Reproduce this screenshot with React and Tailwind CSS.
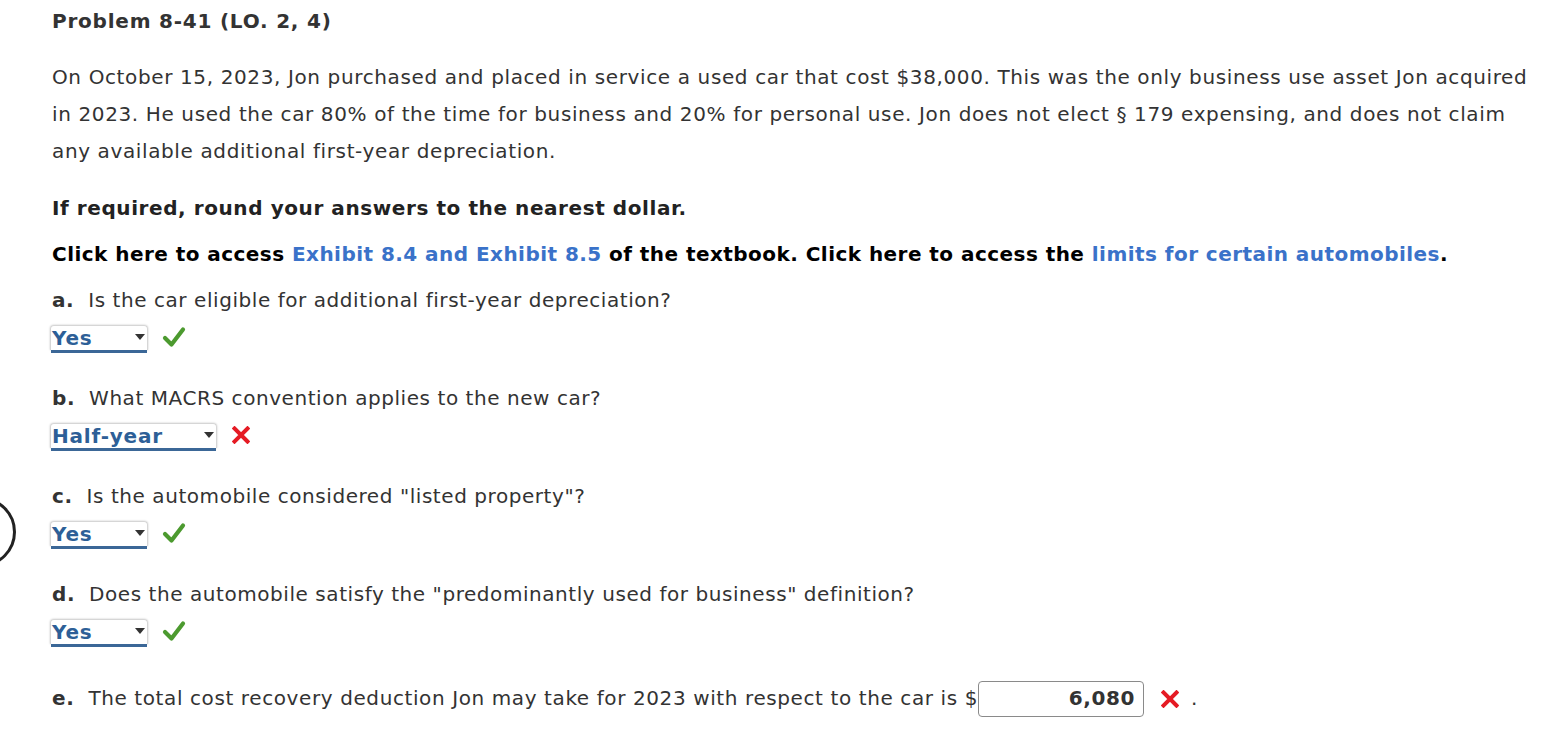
import React from "react";

function Check() {
  return (
    <svg width="24" height="22" viewBox="0 0 24 22" className="ml-[14px] shrink-0">
      <path d="M3 12 L9.5 18.5 L21 3.5" fill="none" stroke="#4c9a2f" strokeWidth="4.2" strokeLinecap="round" strokeLinejoin="round" />
    </svg>
  );
}

function Cross({ className = "" }) {
  return (
    <svg width="18" height="18" viewBox="0 0 18 18" className={className}>
      <path d="M2.5 2.5 L15.5 15.5 M15.5 2.5 L2.5 15.5" fill="none" stroke="#e51b24" strokeWidth="4" strokeLinecap="square" />
    </svg>
  );
}

function Select({ value, width }) {
  return (
    <div
      className="relative ml-[-2px] flex h-[25px] items-center rounded-t-[4px] border border-b-0 border-[#d6d6d6] shadow-[0_0_2px_rgba(0,0,0,0.25)]"
      style={{ width }}
    >
      <span className="pl-[1px] text-[20px] font-bold leading-none tracking-[0.8px] text-[#2d5f97]">{value}</span>
      <svg width="10" height="6" viewBox="0 0 10 6" className="absolute right-[2px] top-[8px]">
        <path d="M0 0 L10 0 L5 6 Z" fill="#333" />
      </svg>
      <div className="absolute bottom-[-3px] left-0 right-0 h-[3px] bg-[#3b6797]" />
    </div>
  );
}

function Question({ label, text, value, width, ok, last }) {
  return (
    <div className={last ? "mb-[31px]" : "mb-[25px]"}>
      <div className="flex h-[37px] items-center whitespace-nowrap tracking-[0.56px]">
        <span className="font-bold">{label}</span>
        <span className="ml-[14px]">{text}</span>
      </div>
      <div className="flex h-[36px] items-center">
        <Select value={value} width={width} />
        {ok ? <Check /> : <Cross className="ml-[15px]" />}
      </div>
    </div>
  );
}

export default function App() {
  return (
    <div className="relative min-h-[732px] overflow-hidden bg-white pl-[52px] pt-[3px] font-['DejaVu_Sans',Verdana,sans-serif] text-[20px] leading-[37px] tracking-[0.6px] text-[#333]">
      <div className="pointer-events-none absolute left-[-54px] top-[497px] h-[70px] w-[70px] rounded-full border-[3px] border-[#222]" />
      <div className="font-bold tracking-[0.78px]">Problem 8-41 (LO. 2, 4)</div>
      <div className="mt-[19px] whitespace-nowrap tracking-[0.62px]">
        <div>On October 15, 2023, Jon purchased and placed in service a used car that cost $38,000. This was the only business use asset Jon acquired</div>
        <div>in 2023. He used the car 80% of the time for business and 20% for personal use. Jon does not elect § 179 expensing, and does not claim</div>
        <div>any available additional first-year depreciation.</div>
      </div>
      <div className="mt-[20px] font-bold tracking-[0.58px] text-[#222]">If required, round your answers to the nearest dollar.</div>
      <div className="mt-[9px] whitespace-nowrap font-bold tracking-[0.45px] text-black">
        Click here to access <span className="text-[#3a72c9]">Exhibit 8.4 and Exhibit 8.5</span> of the textbook. Click here to access the{" "}
        <span className="text-[#3a72c9]">limits for certain automobiles</span>.
      </div>
      <div className="mt-[9px]">
        <Question label="a." text="Is the car eligible for additional first-year depreciation?" value="Yes" width={98} ok />
        <Question label="b." text="What MACRS convention applies to the new car?" value="Half-year" width={167} ok={false} />
        <Question label="c." text={'Is the automobile considered "listed property"?'} value="Yes" width={98} ok />
        <Question label="d." text={'Does the automobile satisfy the "predominantly used for business" definition?'} value="Yes" width={98} ok last />
        <div className="flex h-[37px] items-center whitespace-nowrap">
          <span className="font-bold">e.</span>
          <span className="ml-[14px]">The total cost recovery deduction Jon may take for 2023 with respect to the car is $</span>
          <div className="flex h-[36px] w-[166px] items-center justify-end rounded-[4px] border border-[#8a8a8a] pr-[8px] font-bold">
            6,080
          </div>
          <Cross className="ml-[17px]" />
          <span className="ml-[12px]">.</span>
        </div>
      </div>
    </div>
  );
}
